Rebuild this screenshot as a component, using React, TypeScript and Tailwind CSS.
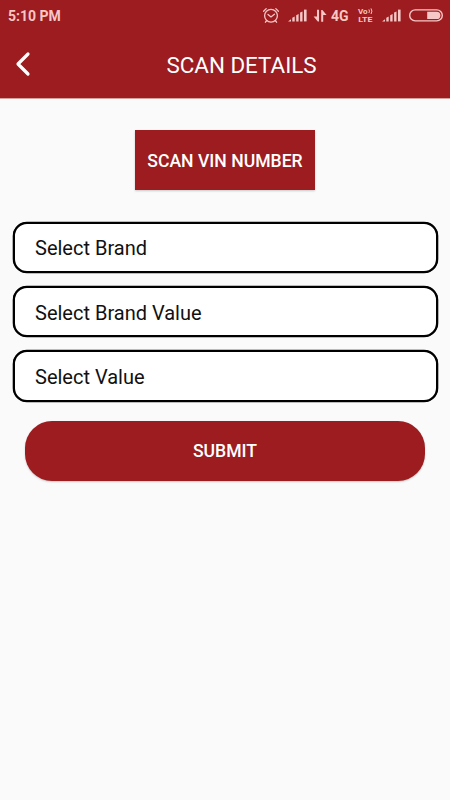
const FIELDS = ['Select Brand', 'Select Brand Value', 'Select Value'];

function AlarmIcon() {
  return (
    <svg width="18" height="18" viewBox="0 0 18 18" fill="none" stroke="currentColor" strokeWidth="1.3" strokeLinecap="round">
      <circle cx="9" cy="8.8" r="6.4" />
      <path d="M1.6 4.2 L4.2 1.6 M16.4 4.2 L13.8 1.6 M4.4 14 L3.4 15.2 M13.6 14 L14.6 15.2" />
      <path d="M6 7.4 L9 10 L12.4 7.2" />
    </svg>
  );
}

function SignalIcon() {
  return (
    <svg width="20" height="14" viewBox="0 0 20 14" fill="currentColor">
      <path d="M0 12.4 L3 10.2 V12.4 Z" />
      <path d="M4.3 12.4 V8.8 L6.7 7.6 V12.4 Z" />
      <path d="M8.2 12.4 V6.2 L10.6 5 V12.4 Z" />
      <path d="M12.1 12.4 V3.6 L14.5 2.4 V12.4 Z" />
      <path d="M16 12.4 V0.6 H18.6 V12.4 Z" />
    </svg>
  );
}

function DataIcon() {
  return (
    <svg width="14" height="14" viewBox="0 0 14 14" fill="currentColor">
      <path d="M4 0.8 H6 V12.4 H4.8 L0.6 7.6 H4 Z" />
      <path d="M10.2 12.8 H8.2 V1 H9.4 L13.6 6 H10.2 Z" />
    </svg>
  );
}

function VolteIcon() {
  return (
    <svg width="16" height="15" viewBox="0 0 16 15" fill="currentColor" className="overflow-visible font-bold">
      <text x="0" y="5.6" fontSize="7.2" textLength="9.6" lengthAdjust="spacingAndGlyphs">Vo</text>
      <path d="M10.9 1.4 Q12 3.2 10.9 5 M13 0.4 Q14.8 3.2 13 6" fill="none" stroke="currentColor" strokeWidth="1" />
      <text x="0.2" y="13.6" fontSize="7.2" textLength="14.2" lengthAdjust="spacingAndGlyphs">LTE</text>
    </svg>
  );
}

function BatteryIcon() {
  return (
    <svg width="34" height="14" viewBox="0 0 34 14">
      <rect x="0.7" y="0.9" width="32.6" height="11" rx="5.5" fill="none" stroke="currentColor" strokeWidth="1.4" />
      <path d="M18.2 2.8 H27.6 Q31.4 2.8 31.4 6.4 Q31.4 10 27.6 10 H18.2 Z" fill="currentColor" />
    </svg>
  );
}

function StatusBar() {
  return (
    <div className="flex h-[30px] items-center pt-[1px] pl-2 pr-[7px] text-[#f7c6c6]">
      <span className="text-[14px] leading-none font-bold">5:10 PM</span>
      <div className="ml-auto flex items-center">
        <AlarmIcon />
        <div className="ml-2"><SignalIcon /></div>
        <div className="ml-[5px]"><DataIcon /></div>
        <span className="ml-1 w-[19px] text-[14px] leading-none font-bold">4G</span>
        <div className="ml-2"><VolteIcon /></div>
        <div className="ml-2"><SignalIcon /></div>
        <div className="ml-[7px]"><BatteryIcon /></div>
      </div>
    </div>
  );
}

export default function App() {
  return (
    <div className="flex h-[800px] w-[450px] flex-col overflow-hidden bg-[#fafafa] font-['Roboto',sans-serif]">
      <header className="h-[98px] bg-[#9c1c1f] shadow-[0_1px_0_#d9a0a0]">
        <StatusBar />
        <div className="grid h-[68px] grid-cols-[32px_1fr] items-center">
          <button aria-label="Back" className="justify-self-end text-white">
            <svg width="18" height="26" viewBox="0 0 18 26" fill="none" stroke="currentColor" strokeWidth="3.2" strokeLinecap="round" strokeLinejoin="round">
              <path d="M14 3 L4 13 L14 23" />
            </svg>
          </button>
          <h1 className="pt-1 pl-[1px] text-center text-[22.4px] text-white">SCAN DETAILS</h1>
        </div>
      </header>

      <main className="flex flex-col items-center pt-8">
        <button className="h-[60px] w-[180px] bg-[#9c1c1f] pt-0.5 text-[17.6px] font-medium text-white shadow-[0_1px_2px_rgba(0,0,0,0.2)]">
          SCAN VIN NUMBER
        </button>

        <div className="mt-[31.5px] flex w-[425px] flex-col gap-[13px]">
          {FIELDS.map((label) => (
            <button
              key={label}
              className="h-[51.4px] rounded-[14px] border-2 border-black bg-white pt-[2px] pl-[20.5px] text-left text-[20px] text-[#111111] shadow-[0_0_0_0.3px_#000000]"
            >
              {label}
            </button>
          ))}
        </div>

        <button className="mt-[19px] h-[60px] w-[400px] rounded-[27px] bg-[#9c1c1f] pt-0.5 text-[17.6px] font-medium text-white shadow-[0_1px_2px_rgba(0,0,0,0.2)]">
          SUBMIT
        </button>
      </main>
    </div>
  );
}
